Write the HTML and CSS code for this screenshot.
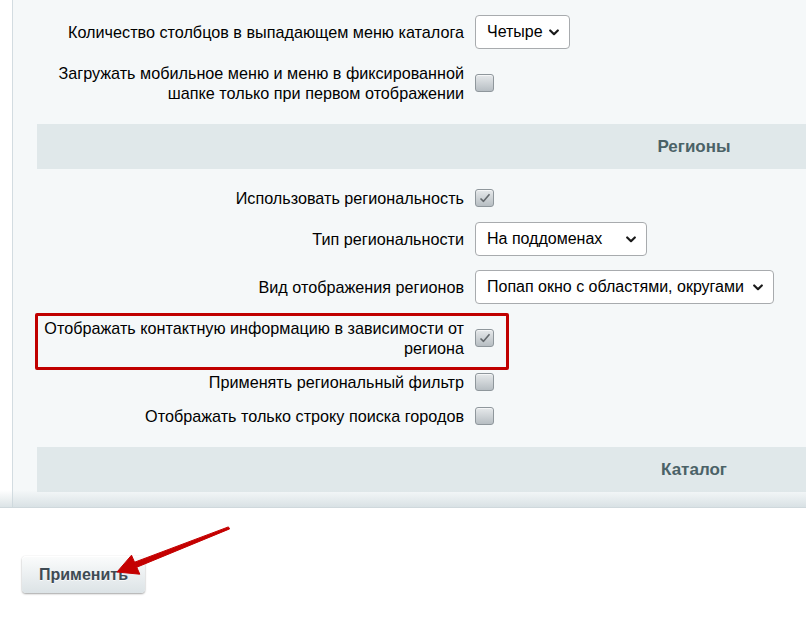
FILE: index.html
```html
<!DOCTYPE html>
<html lang="ru">
<head>
    <meta charset="UTF-8">
    <meta name="viewport" content="width=device-width, initial-scale=1.0">
    <title>Настройки решения</title>
    <link rel="stylesheet" href="styles.css">
</head>
<body>
    <div class="page">
        <div class="edit-area">
            <div class="panel">
                <div class="settings">
                    <div class="row row-select">
                        <div class="label">Количество столбцов в выпадающем меню каталога</div>
                        <div class="control">
                            <div class="select select-sm">
                                <span>Четыре</span>
                                <svg class="chevron" width="10" height="7" viewBox="0 0 10 7"><path d="M1.2 1.5 L5 5.2 L8.8 1.5" /></svg>
                            </div>
                        </div>
                    </div>
                    <div class="row">
                        <div class="label">Загружать мобильное меню и меню в фиксированной шапке только при первом отображении</div>
                        <div class="control"><span class="checkbox"></span></div>
                    </div>

                    <div class="heading">Регионы</div>

                    <div class="row">
                        <div class="label">Использовать региональность</div>
                        <div class="control">
                            <span class="checkbox checked">
                                <svg width="12" height="10" viewBox="0 0 12 10"><path d="M1.5 5.5 L4.5 8.3 L10.5 1.2" /></svg>
                            </span>
                        </div>
                    </div>
                    <div class="row row-select">
                        <div class="label">Тип региональности</div>
                        <div class="control">
                            <div class="select select-md">
                                <span>На поддоменах</span>
                                <svg class="chevron" width="10" height="7" viewBox="0 0 10 7"><path d="M1.2 1.5 L5 5.2 L8.8 1.5" /></svg>
                            </div>
                        </div>
                    </div>
                    <div class="row row-select">
                        <div class="label">Вид отображения регионов</div>
                        <div class="control">
                            <div class="select select-lg">
                                <span>Попап окно с областями, округами</span>
                                <svg class="chevron" width="10" height="7" viewBox="0 0 10 7"><path d="M1.2 1.5 L5 5.2 L8.8 1.5" /></svg>
                            </div>
                        </div>
                    </div>
                    <div class="row marked">
                        <div class="label">Отображать контактную информацию в зависимости от региона</div>
                        <div class="control">
                            <span class="checkbox checked">
                                <svg width="12" height="10" viewBox="0 0 12 10"><path d="M1.5 5.5 L4.5 8.3 L10.5 1.2" /></svg>
                            </span>
                        </div>
                    </div>
                    <div class="row">
                        <div class="label">Применять региональный фильтр</div>
                        <div class="control"><span class="checkbox"></span></div>
                    </div>
                    <div class="row">
                        <div class="label">Отображать только строку поиска городов</div>
                        <div class="control"><span class="checkbox"></span></div>
                    </div>

                    <div class="heading">Каталог</div>
                </div>
            </div>
        </div>

        <div class="buttons">
            <button type="submit" class="btn">Применить</button>
        </div>

        <!-- pointer to the save button -->
        <svg class="pointer" width="806" height="627" viewBox="0 0 806 627">
            <polygon points="229.6,528.9 228.4,526.9 134.6,562.2 136.8,567.2" />
            <polygon points="117,572 131.5,555.2 139.8,574.2" />
        </svg>
    </div>
</body>
</html>
```

FILE: styles.css
```css
:root {
    --panel-bg: #f5f8f9;
    --heading-bg: #e0e8ea;
    --heading-text: #4b6267;
    --line: #d3dce1;
    --text: #000000;
    --mark: #c00000;
    --font: 'Liberation Sans', Arial, sans-serif;
}

* {
    margin: 0;
    padding: 0;
    box-sizing: border-box;
}

html,
body {
    overflow: hidden;
}

body {
    background: #ffffff;
    font-family: var(--font);
    color: var(--text);
}

.page {
    position: relative;
    width: 806px;
    height: 627px;
}

.edit-area {
    position: relative;
    border-bottom: 1px solid #cfd8dc;
}

/* soft shadow strip along the bottom of the form */
.edit-area::after {
    content: '';
    position: absolute;
    left: 0;
    right: 0;
    bottom: 0;
    height: 17px;
    background: linear-gradient(to bottom, rgba(205, 216, 220, 0), rgba(205, 216, 220, 0.7));
    pointer-events: none;
}

.panel {
    margin-left: 12px;
    border-left: 1px solid var(--line);
    background: var(--panel-bg);
    padding: 8px 0 15px 24px;
}

.row {
    position: relative;
    display: grid;
    grid-template-columns: 427px 1fr;
    column-gap: 11px;
    align-items: center;
    padding: 7px 0;
}

.label {
    text-align: right;
    font-size: 16.2px;
    line-height: 20px;
}

.control {
    display: flex;
    align-items: center;
}

.marked::after {
    content: '';
    position: absolute;
    left: -2px;
    top: 2px;
    width: 468px;
    height: 51px;
    border: 3px solid var(--mark);
    border-radius: 2px;
}

.heading {
    margin: 14px 0 12px;
    height: 45px;
    padding-left: 545px;
    line-height: 45px;
    background: var(--heading-bg);
    color: var(--heading-text);
    font-size: 17px;
    font-weight: 700;
    text-align: center;
}

.heading:last-child {
    margin-bottom: 0;
}

.select {
    display: flex;
    justify-content: space-between;
    align-items: center;
    height: 34px;
    padding: 0 10px 0 11px;
    background: #ffffff;
    border: 1px solid #a8abae;
    border-radius: 4px;
    font-size: 16px;
    color: #000000;
}

.select-sm {
    width: 95px;
}

.select-md {
    width: 172px;
}

.select-lg {
    width: 299px;
}

.chevron path {
    fill: none;
    stroke: #1a1a1a;
    stroke-width: 2.2;
    stroke-linecap: round;
    stroke-linejoin: round;
}

.checkbox {
    display: flex;
    align-items: center;
    justify-content: center;
    width: 19px;
    height: 18px;
    border: 1px solid #8f979c;
    border-radius: 3px;
    background: linear-gradient(to bottom, #e6e9eb, #b7bec3);
    box-shadow: inset 0 1px 0 rgba(255, 255, 255, 0.6);
}

.checkbox svg path {
    fill: none;
    stroke: #63686c;
    stroke-width: 1.6;
    stroke-linejoin: round;
}

.buttons {
    padding: 48px 0 0 22px;
}

.btn {
    width: 123px;
    height: 37px;
    border: none;
    border-radius: 4px;
    background: linear-gradient(to bottom, #fbfcfc, #dce3e6);
    box-shadow: 0 0 1px rgba(0, 0, 0, 0.15), 0 1px 2px rgba(0, 0, 0, 0.35), inset 0 1px 0 #ffffff;
    color: #3f4b54;
    font-family: var(--font);
    font-size: 16px;
    font-weight: 700;
    text-shadow: 0 1px rgba(255, 255, 255, 0.7);
    cursor: pointer;
}

.pointer {
    position: absolute;
    left: 0;
    top: 0;
    pointer-events: none;
}

.pointer polygon {
    fill: #c40000;
    stroke: #c40000;
    stroke-width: 1;
    stroke-linejoin: round;
}
```
